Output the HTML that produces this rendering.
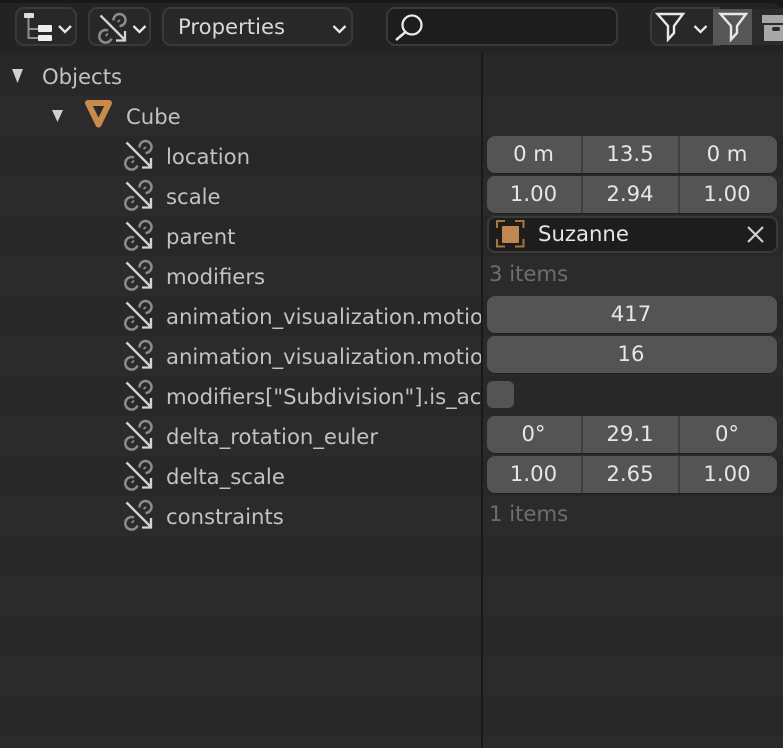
<!DOCTYPE html>
<html><head><meta charset="utf-8">
<style>
html,body{margin:0;padding:0;background:#232323}
#p{position:relative;width:783px;height:748px;overflow:hidden;background:#232323;font-family:"DejaVu Sans","Liberation Sans",sans-serif;font-size:21.2px}
#p div{position:absolute;box-sizing:border-box;white-space:nowrap}
.band{left:0;width:783px;height:40px}
.a{background:#282828}.b{background:#2b2b2b}
.lab{color:#c2c2c2;line-height:42px;height:42px}
.hb{background:#282828;border:2px solid #3a3a3a;border-radius:9px;top:7px;height:39px}
.w{left:487px;width:290px;height:37px;background:#545454;border-radius:8px;box-shadow:0 1px 1px #1e1e1e}
.c{top:0;height:37px;line-height:36px;text-align:center;color:#e6e6e6}
.c+.c{border-left:2px solid #3e3e3e}
.it{left:489px;color:#6e6e6e;line-height:42px;height:42px}
svg{position:absolute;overflow:visible}
</style></head><body>
<div id="p">
<svg width="0" height="0" style="position:absolute"><defs>
<g id="lk" fill="none" stroke-width="2.5">
<path d="M15.500 6.500 A6 6 0 1 1 21.500 12" stroke="#8c8c8c"/>
<path d="M19.500 8 L22 6" stroke="#8c8c8c" stroke-width="1.800"/>
<path d="M10 16.500 A6.300 6.300 0 1 0 13.500 24.500" stroke="#8c8c8c"/>
<path d="M7.500 22 L10 19.500" stroke="#8c8c8c" stroke-width="1.800"/>
<path d="M2.500 1.500 L27 26" stroke="#d4d4d4" stroke-width="2.300"/>
<path d="M27 17 V26.500 H18" stroke="#d4d4d4" stroke-width="2.300"/>
</g>
<path id="ch" d="M0 0 L6 6 L12 0" fill="none" stroke="#e6e6e6" stroke-width="2.300"/>
<path id="fn" d="M1.500 1.500 H27 L18 13.500 V20.500 L12 27 V13.500 Z" fill="none" stroke="#e8e8e8" stroke-width="2.400"/>
</defs></svg>

<!-- top -->
<div style="left:0;top:0;width:783px;height:3px;background:#181818"></div>
<div style="left:770px;top:0;width:13px;height:8px;background:#181818"></div>
<div style="left:0;top:3px;width:783px;height:50px;background:#232323;border-top-right-radius:12px"></div>

<!-- row bands -->
<div class="band a" style="top:56px;height:40px"></div>
<div class="band b" style="top:96px"></div>
<div class="band a" style="top:136px"></div>
<div class="band b" style="top:176px"></div>
<div class="band a" style="top:216px"></div>
<div class="band b" style="top:256px"></div>
<div class="band a" style="top:296px"></div>
<div class="band b" style="top:336px"></div>
<div class="band a" style="top:376px"></div>
<div class="band b" style="top:416px"></div>
<div class="band a" style="top:456px"></div>
<div class="band b" style="top:496px"></div>
<div class="band a" style="top:536px"></div>
<div class="band b" style="top:576px"></div>
<div class="band a" style="top:616px"></div>
<div class="band b" style="top:656px"></div>
<div class="band a" style="top:696px"></div>
<div class="band b" style="top:736px;height:12px"></div>
<div style="left:0;top:53px;width:783px;height:3px;background:#262626"></div>

<!-- header buttons -->
<div class="hb" style="left:15px;width:62px"></div>
<div class="hb" style="left:88px;width:63px"></div>
<div class="hb" style="left:162px;width:191px"></div>
<div class="hb" style="left:386px;width:232px;background:#1d1d1d"></div>

<svg style="left:0;top:0" width="783" height="56">
<rect x="24" y="13" width="10" height="5" rx="1" fill="#dcdcdc"/>
<path d="M28.500 18 V38 H38 M28.500 29 H38" fill="none" stroke="#8f8f8f" stroke-width="2"/>
<rect x="38" y="25" width="14" height="7" rx="1" fill="#eeeeee"/>
<rect x="38" y="35" width="14" height="6" rx="1" fill="#eeeeee"/>
<use href="#ch" x="59" y="26"/>
<use href="#lk" x="98" y="14"/>
<use href="#ch" x="133.500" y="26"/>
<use href="#ch" x="333.500" y="26"/>
<circle cx="412" cy="25" r="9.500" fill="none" stroke="#e8e8e8" stroke-width="2.300"/>
<path d="M405.500 32 L396 40" stroke="#e8e8e8" stroke-width="2.500" fill="none"/>
</svg>
<div style="left:178px;top:7px;line-height:39px;color:#d8d8d8">Properties</div>

<!-- filter -->
<div style="left:650px;top:7px;width:70px;height:39px;background:#282828;border:2px solid #3a3a3a;border-right:0;border-radius:9px 0 0 9px"></div>
<div style="left:713px;top:9px;width:39px;height:36px;background:#565656"></div>
<div style="left:752px;top:9px;width:31px;height:36px;background:#2b2b2b"></div>
<svg style="left:0;top:0" width="783" height="56">
<use href="#fn" x="656" y="12.500"/>
<use href="#ch" x="694.500" y="26"/>
<use href="#fn" x="719" y="12.500"/>
<rect x="762" y="15" width="21" height="8" fill="#a8a8a8"/>
<rect x="764" y="25" width="19" height="16" fill="#a8a8a8"/>
<rect x="772" y="27" width="8" height="4" rx="2" fill="#2b2b2b"/>
</svg>

<!-- divider -->
<div style="left:481px;top:53px;width:2px;height:695px;background:#191919"></div>

<!-- tree -->
<svg style="left:0;top:0" width="483" height="140">
<path d="M12 69 H23 L17.500 83 Z" fill="#d0d0d0"/>
<path d="M52 110 H63 L57.500 122 Z" fill="#d0d0d0"/>
<path d="M88 103 H109 L98.500 124.500 Z" fill="none" stroke="#c98a4b" stroke-width="6" stroke-linejoin="round"/>
</svg>
<div class="lab" style="left:42px;top:56px">Objects</div>
<div class="lab" style="left:126px;top:96px">Cube</div>

<svg style="left:0;top:0" width="160" height="540">
<use href="#lk" x="124" y="141"/><use href="#lk" x="124" y="181"/><use href="#lk" x="124" y="221"/><use href="#lk" x="124" y="261"/><use href="#lk" x="124" y="301"/><use href="#lk" x="124" y="341"/><use href="#lk" x="124" y="381"/><use href="#lk" x="124" y="421"/><use href="#lk" x="124" y="461"/><use href="#lk" x="124" y="501"/>
</svg>

<div style="left:166px;top:136px;width:315px;height:400px;overflow:hidden">
<div class="lab" style="left:0;top:0">location</div>
<div class="lab" style="left:0;top:40px">scale</div>
<div class="lab" style="left:0;top:80px">parent</div>
<div class="lab" style="left:0;top:120px">modifiers</div>
<div class="lab" style="left:0;top:160px">animation_visualization.motion_path</div>
<div class="lab" style="left:0;top:200px">animation_visualization.motion_path</div>
<div class="lab" style="left:0;top:240px">modifiers["Subdivision"].is_active</div>
<div class="lab" style="left:0;top:280px">delta_rotation_euler</div>
<div class="lab" style="left:0;top:320px">delta_scale</div>
<div class="lab" style="left:0;top:360px">constraints</div>
</div>

<!-- values -->
<div class="w" style="top:136px"><div class="c" style="left:0;width:93px">0 m</div><div class="c" style="left:94px;width:96px">13.5</div><div class="c" style="left:191px;width:96px">0 m</div></div>
<div class="w" style="top:176px"><div class="c" style="left:0;width:93px">1.00</div><div class="c" style="left:94px;width:96px">2.94</div><div class="c" style="left:191px;width:96px">1.00</div></div>

<div style="left:487px;top:216px;width:291px;height:37px;background:#1d1d1d;border:2px solid #3a3a3a;border-radius:8px"></div>
<svg style="left:0;top:210px" width="783" height="50">
<rect x="502" y="16" width="17" height="17" rx="1" fill="#c08850"/>
<path d="M497 18 V11 H505 M515 11 H523.500 V18 M497 29 V36.500 H505 M515 36.500 H523.500 V29" fill="none" stroke="#a8753f" stroke-width="2"/>
<path d="M748 17 L763 32 M763 17 L748 32" stroke="#cfcfcf" stroke-width="2.200"/>
</svg>
<div style="left:538px;top:214px;line-height:39px;color:#e6e6e6">Suzanne</div>

<div class="it" style="top:253px">3 items</div>

<div class="w" style="top:296px"><div class="c" style="left:0;width:288px">417</div></div>
<div class="w" style="top:336px"><div class="c" style="left:0;width:288px">16</div></div>

<div style="left:487px;top:381px;width:27px;height:27px;background:#545454;border-radius:6px"></div>

<div class="w" style="top:416px"><div class="c" style="left:0;width:93px">0°</div><div class="c" style="left:94px;width:96px">29.1</div><div class="c" style="left:191px;width:96px">0°</div></div>
<div class="w" style="top:456px"><div class="c" style="left:0;width:93px">1.00</div><div class="c" style="left:94px;width:96px">2.65</div><div class="c" style="left:191px;width:96px">1.00</div></div>

<div class="it" style="top:493px">1 items</div>
</div>
</body></html>
